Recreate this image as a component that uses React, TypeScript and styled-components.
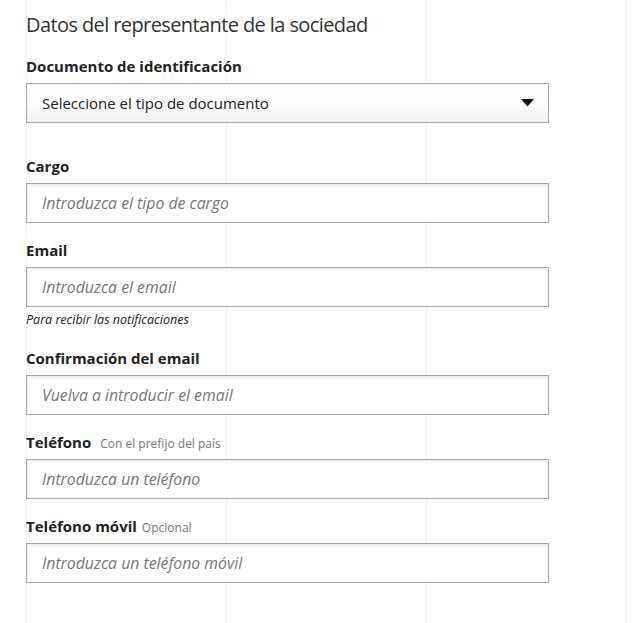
import React from "react";
import styled, { createGlobalStyle } from "styled-components";

const GlobalStyle = createGlobalStyle`
  html, body { margin: 0; padding: 0; height: 100%; }
  body {
    font-family: "Open Sans", "Noto Sans", Arial, sans-serif;
    color: #222;
    background-color: #fff;
    background-image: linear-gradient(to right, #f0f0f0 1px, transparent 1px);
    background-size: 200px 100%;
    background-position: 26px 0;
    background-repeat: repeat-x;
  }
  #root { height: 100%; }
`;

const Page = styled.div`
  padding: 13px 0 0 26px;
  width: 523px;
`;

const Title = styled.h2`
  margin: 0 0 19px;
  font-size: 20px;
  line-height: 24px;
  font-weight: 400;
  letter-spacing: -0.6px;
  color: #333;
`;

const Field = styled.div<{ $gap?: number }>`
  display: flex;
  flex-direction: column;
  margin-bottom: ${(p) => p.$gap ?? 17}px;
`;

const Label = styled.label`
  display: flex;
  align-items: baseline;
  gap: 9px;
  height: 20px;
  line-height: 20px;
  margin-bottom: 7px;
  font-size: 15px;
  font-weight: 700;
  color: #222;
`;

const Hint = styled.span<{ $tight?: boolean }>`
  font-size: 12px;
  font-weight: 400;
  color: #777;
  margin-left: ${(p) => (p.$tight ? "-4px" : "0")};
`;

const TextInput = styled.input`
  box-sizing: border-box;
  width: 100%;
  height: 40px;
  margin: 0;
  padding: 0 15px;
  border: 1px solid #a9a9a9;
  border-radius: 0;
  background: #fff;
  box-shadow: inset 0 2px 3px rgba(0, 0, 0, 0.08);
  font-family: inherit;
  font-size: 15.8px;
  color: #222;
  outline: none;
  &::placeholder {
    color: #777;
    font-style: italic;
    opacity: 1;
  }
`;

const SelectBox = styled.div`
  box-sizing: border-box;
  display: flex;
  align-items: center;
  justify-content: space-between;
  height: 40px;
  padding: 0 14px 0 15px;
  border: 1px solid #a9a9a9;
  background: linear-gradient(to bottom, #ffffff 0%, #fbfbfb 50%, #f1f1f1 100%);
  font-size: 15px;
  color: #222;
`;

const Arrow = styled.svg`
  width: 13px;
  height: 8px;
  display: block;
`;

const Help = styled.p`
  margin: 4px 0 2px;
  font-size: 12.5px;
  line-height: 18px;
  font-style: italic;
  color: #222;
`;

export default function App() {
  return (
    <>
      <GlobalStyle />
      <Page>
        <Title>Datos del representante de la sociedad</Title>

        <Field $gap={33}>
          <Label>Documento de identificación</Label>
          <SelectBox>
            <span>Seleccione el tipo de documento</span>
            <Arrow viewBox="0 0 13 8">
              <path d="M0 0 H13 L6.5 7.5 Z" fill="#111" />
            </Arrow>
          </SelectBox>
        </Field>

        <Field>
          <Label>Cargo</Label>
          <TextInput placeholder="Introduzca el tipo de cargo" />
        </Field>

        <Field>
          <Label>Email</Label>
          <TextInput placeholder="Introduzca el email" />
          <Help>Para recibir las notificaciones</Help>
        </Field>

        <Field>
          <Label>Confirmación del email</Label>
          <TextInput placeholder="Vuelva a introducir el email" />
        </Field>

        <Field>
          <Label>
            Teléfono <Hint>Con el prefijo del país</Hint>
          </Label>
          <TextInput placeholder="Introduzca un teléfono" />
        </Field>

        <Field>
          <Label>
            Teléfono móvil <Hint $tight>Opcional</Hint>
          </Label>
          <TextInput placeholder="Introduzca un teléfono móvil" />
        </Field>
      </Page>
    </>
  );
}
